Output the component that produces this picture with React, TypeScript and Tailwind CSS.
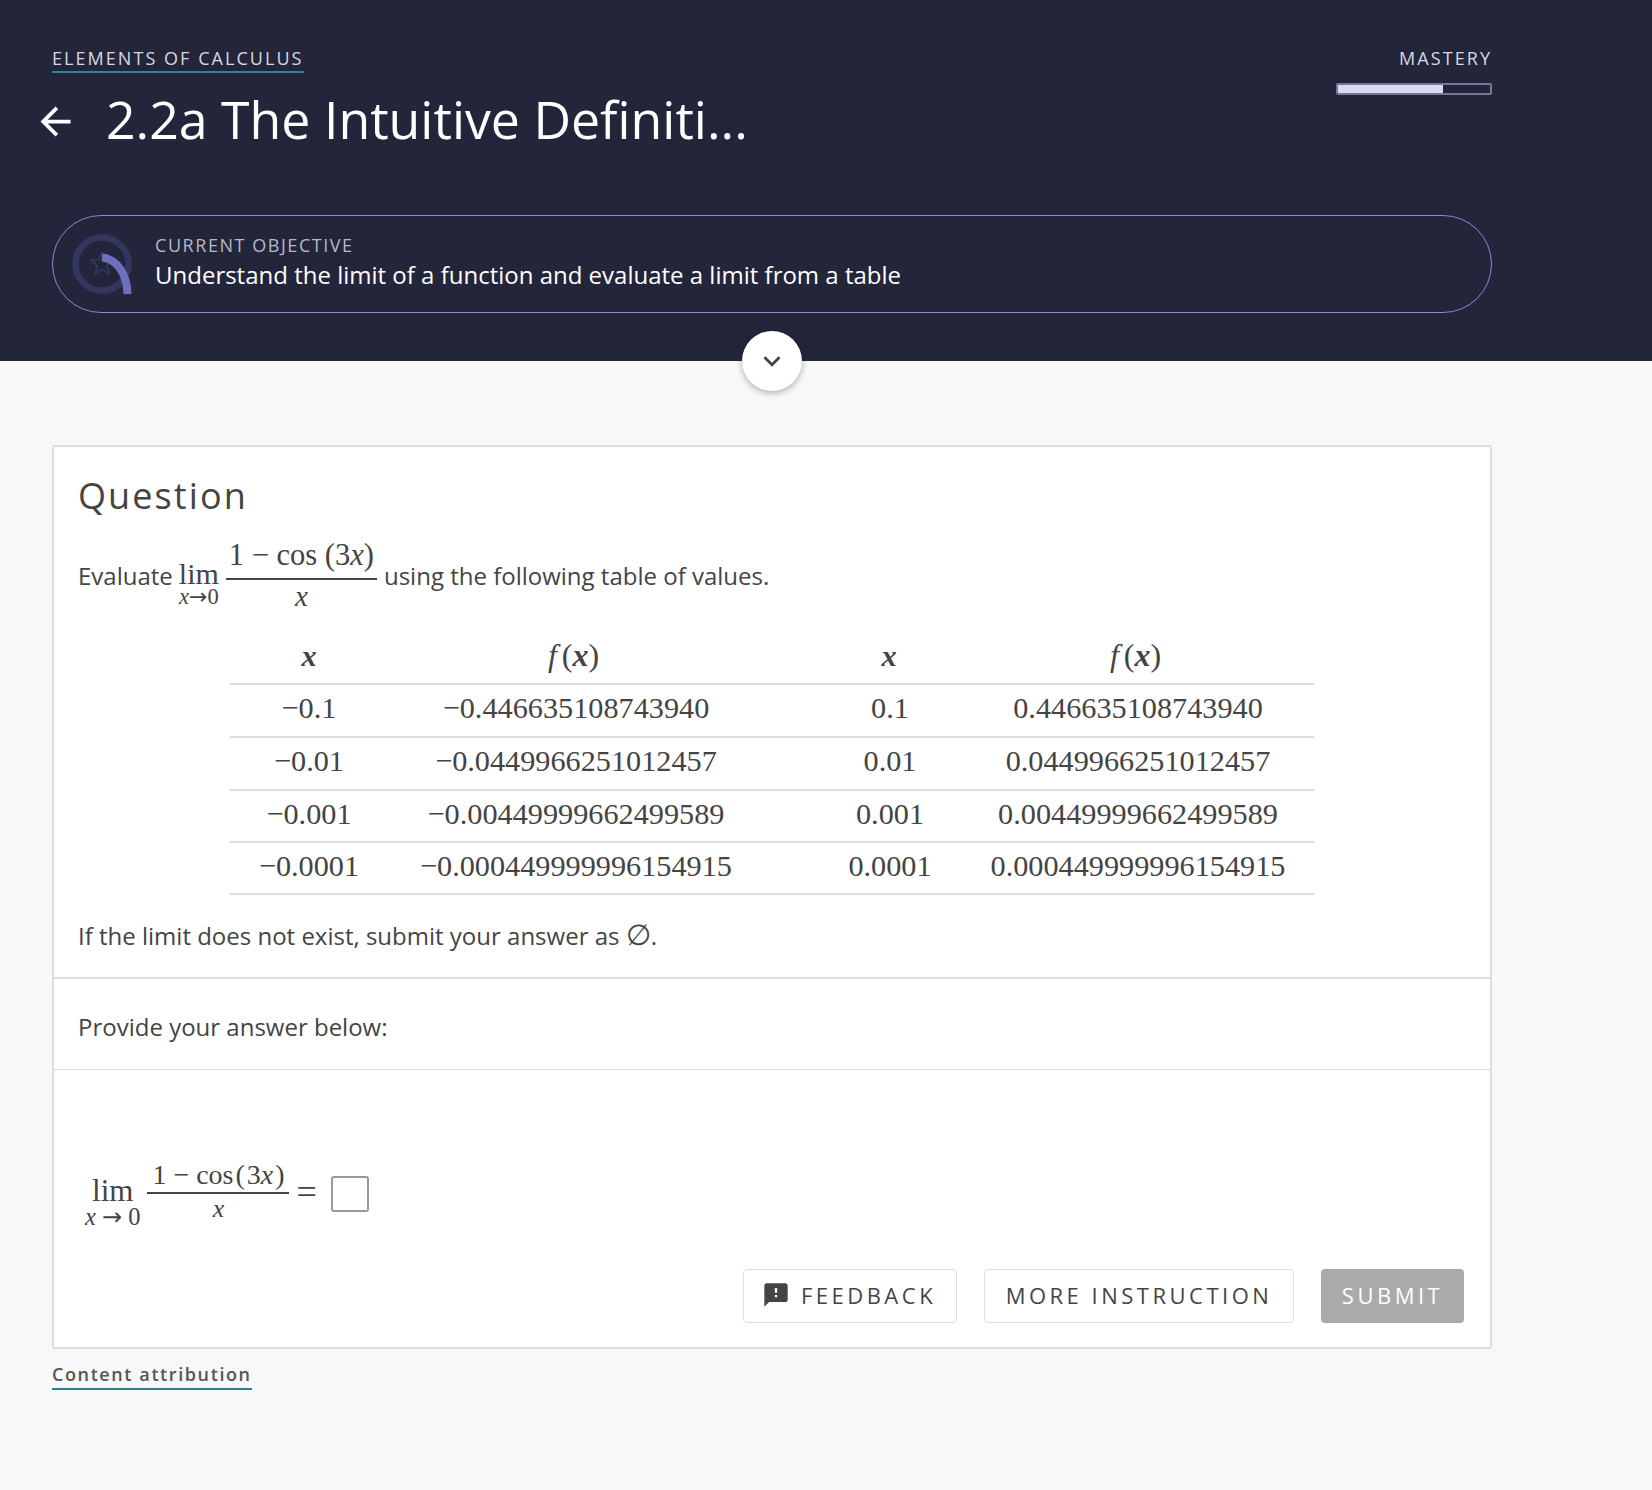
const ROWS = [
    { cells: ['\u22120.1', '\u22120.446635108743940', '0.1', '0.446635108743940'], height: 'h-[53px]' },
    { cells: ['\u22120.01', '\u22120.0449966251012457', '0.01', '0.0449966251012457'], height: 'h-[53px]' },
    { cells: ['\u22120.001', '\u22120.00449999662499589', '0.001', '0.00449999662499589'], height: 'h-[52px]' },
    { cells: ['\u22120.0001', '\u22120.000449999996154915', '0.0001', '0.000449999996154915'], height: 'h-[52px]' },
]

const serif = "font-['Liberation_Serif',serif]"
const arrowFont = "font-['DejaVu_Sans',sans-serif]"

function ObjectiveIcon() {
    return (
        <svg viewBox="0 0 60 60" className="w-[60px] h-[60px] shrink-0">
            <circle cx="30" cy="30" r="26.5" fill="none" stroke="#33365f" strokeWidth="6.5" />
            <path
                d="M30 18 L33 25.9 L41.4 26.3 L34.8 31.5 L37 40 L30 35 L23 40 L25.2 31.5 L18.6 26.3 L27 25.9 Z"
                fill="none"
                stroke="#33365f"
                strokeWidth="1.8"
                strokeLinejoin="round"
            />
            <path d="M30 23.5 C45 25 55 40 55.5 60" fill="none" stroke="#6b70bd" strokeWidth="8" />
        </svg>
    )
}

function FxHead() {
    return (
        <th className="pb-[4px] pr-[5px] text-[32px] font-normal">
            <i className="mr-[5px]">f</i>(<b className="italic">x</b>)
        </th>
    )
}

export default function App() {
    return (
        <div className="min-h-[1490px] bg-[#f8f8f8] font-['Open_Sans',sans-serif] text-[#444444]">
            {/* Header */}
            <header className="relative h-[361px] bg-[#23253b] pl-[52px] pt-[46px] text-white">
                <div className="w-[1440px]">
                    <div className="flex justify-between">
                        <span className="inline-block h-[27px] border-b-2 border-[#2f8593] text-[18px] leading-[24px] tracking-[2.05px] text-[#d9d9e2]">
                            ELEMENTS OF CALCULUS
                        </span>
                        <div className="flex flex-col items-end">
                            <span className="text-[18px] leading-[24px] tracking-[2.05px] text-[#d9d9e2]">MASTERY</span>
                            <div className="mt-[13px] h-[12px] w-[156px] rounded-[2px] border-2 border-[#75768f]">
                                <div className="h-full w-[105px] bg-[#d9daf3]" />
                            </div>
                        </div>
                    </div>
                    <div className="-ml-[19px] -mt-[10px] flex items-center">
                        <svg viewBox="0 0 24 24" className="mt-[4px] h-[45px] w-[45px] shrink-0" fill="#ffffff">
                            <path d="M20 11H7.83l5.59-5.59L12 4l-8 8 8 8 1.41-1.41L7.83 13H20v-2z" />
                        </svg>
                        <h1 className="ml-[28px] text-[51.8px] leading-[68px] font-normal">2.2a The Intuitive Definiti...</h1>
                    </div>
                    <div className="mt-[62px] flex h-[98px] items-center rounded-[49px] border border-[#8589d8] pl-[19px]">
                        <ObjectiveIcon />
                        <div className="ml-[23px] pb-[4px]">
                            <div className="text-[18px] leading-[24px] tracking-[1.55px] text-[#b7b8c6]">CURRENT OBJECTIVE</div>
                            <div className="mt-[2px] text-[24px] leading-[32px]">
                                Understand the limit of a function and evaluate a limit from a table
                            </div>
                        </div>
                    </div>
                </div>
                <button className="absolute left-[742px] top-[331px] flex h-[60px] w-[60px] items-center justify-center rounded-full bg-white shadow-[0_2px_6px_rgba(0,0,0,0.3)]">
                    <svg viewBox="0 0 24 24" className="h-[34px] w-[34px]" fill="#444444">
                        <path d="M16.59 8.59L12 13.17 7.41 8.59 6 10l6 6 6-6z" />
                    </svg>
                </button>
            </header>

            {/* Question card */}
            <main className="ml-[52px] w-[1440px] pt-[84px]">
                <section className="rounded-[3px] border-2 border-[#dddddd] bg-white">
                    <div className="border-b-2 border-[#dddddd] px-[24px] pb-[25px] pt-[25px]">
                        <h2 className="text-[36px] leading-[48px] font-normal tracking-[2.1px]">Question</h2>
                        <div className="mt-[20px] flex h-[76px] items-center text-[24px] leading-[32px]">
                            <span className="-mt-[4px]">Evaluate</span>
                            <div className={`${serif} ml-[6px] mt-[14px] flex flex-col items-center`}>
                                <span className="text-[30px] leading-[24px]">lim</span>
                                <span className="text-[22.5px] leading-[22px]">
                                    <i>x</i>
                                    <span className={`${arrowFont} text-[22px]`}>{'\u2192'}</span>0
                                </span>
                            </div>
                            <div className={`${serif} mb-[6px] ml-[7px] flex flex-col items-center`}>
                                <span className="px-[3px] pb-[6px] text-[30.5px] leading-[34px]">
                                    1 {'\u2212'} cos (3<i>x</i>)
                                </span>
                                <div className="h-[2px] w-full bg-[#444444]" />
                                <span className="-mt-[1px] text-[29px] leading-[34px] italic">x</span>
                            </div>
                            <span className="-mt-[4px] ml-[7px]">using the following table of values.</span>
                        </div>
                        <table className={`${serif} ml-[152px] mt-[15px] w-[1084px] table-fixed border-collapse text-center text-[30.25px]`}>
                            <colgroup>
                                <col className="w-[158px]" />
                                <col className="w-[376px]" />
                                <col className="w-[198px]" />
                                <col className="w-[352px]" />
                            </colgroup>
                            <thead>
                                <tr className="h-[53px] border-b-2 border-[#dddddd]">
                                    <th className="pb-[1px] font-bold italic">x</th>
                                    <FxHead />
                                    <th className="pb-[1px] pl-[52px] font-bold italic">x</th>
                                    <FxHead />
                                </tr>
                            </thead>
                            <tbody>
                                {ROWS.map((row) => (
                                    <tr key={row.cells[0]} className={`${row.height} border-b-2 border-[#dddddd]`}>
                                        <td className="pb-[3px]">{row.cells[0]}</td>
                                        <td className="pb-[3px]">{row.cells[1]}</td>
                                        <td className="pb-[3px] pl-[54px]">{row.cells[2]}</td>
                                        <td className="pb-[3px]">{row.cells[3]}</td>
                                    </tr>
                                ))}
                            </tbody>
                        </table>
                        <p className="mt-[25px] text-[24px] leading-[32px]">
                            If the limit does not exist, submit your answer as <span className="text-[29px] leading-[0]">{'\u2205'}</span>.
                        </p>
                    </div>
                    <div className="border-b border-[#dddddd] px-[24px] pb-[26px] pt-[32px] text-[24px] leading-[32px]">
                        Provide your answer below:
                    </div>
                    <div className="px-[24px] pb-[24px] pt-[84px]">
                        <div className={`${serif} flex items-center pl-[7px]`}>
                            <div className="mt-[24px] flex flex-col items-center">
                                <span className="text-[31px] leading-[26px]">lim</span>
                                <span className="text-[24.5px] leading-[26px]">
                                    <i>x</i> <span className={`${arrowFont} text-[24px]`}>{'\u2192'}</span> 0
                                </span>
                            </div>
                            <div className="ml-[7px] flex flex-col items-center">
                                <span className="w-[142px] text-center text-[28px] leading-[34px]">
                                    1 {'\u2212'} cos<span className="mx-[2px]">(</span>3<i>x</i><span className="ml-[2px]">)</span>
                                </span>
                                <div className="h-[2px] w-full bg-[#444444]" />
                                <span className="-mt-[2px] text-[26px] leading-[34px] italic">x</span>
                            </div>
                            <span className="ml-[7px] text-[36px] leading-[34px]">=</span>
                            <div className="ml-[14px] mt-[3px] h-[36px] w-[38px] rounded-[3px] border-2 border-[#999999]" />
                        </div>
                        <div className="mt-[39px] flex justify-end gap-[27px] pr-[2px] text-[22px] tracking-[3.5px]">
                            <button className="flex h-[54px] w-[214px] items-center justify-center rounded-[4px] border border-[#dddddd] bg-white pb-[2px] pr-[2px]">
                                <svg viewBox="0 0 24 24" className="mr-[11px] h-[28px] w-[28px]" fill="#444444">
                                    <path d="M20 2H4c-1.1 0-1.99.9-1.99 2L2 22l4-4h14c1.1 0 2-.9 2-2V4c0-1.1-.9-2-2-2zm-7 12h-2v-2h2v2zm0-4h-2V6h2v4z" />
                                </svg>
                                FEEDBACK
                            </button>
                            <button className="h-[54px] w-[310px] rounded-[4px] border border-[#dddddd] bg-white pb-[2px]">MORE INSTRUCTION</button>
                            <button className="h-[54px] w-[143px] rounded-[4px] bg-[#aaaaaa] pb-[2px] text-white">SUBMIT</button>
                        </div>
                    </div>
                </section>
                <a className="mt-[12px] inline-block h-[29px] border-b-2 border-[#2f7f8c] text-[18px] font-semibold leading-[26px] tracking-[1.6px] text-[#555555]">
                    Content attribution
                </a>
            </main>
        </div>
    )
}
